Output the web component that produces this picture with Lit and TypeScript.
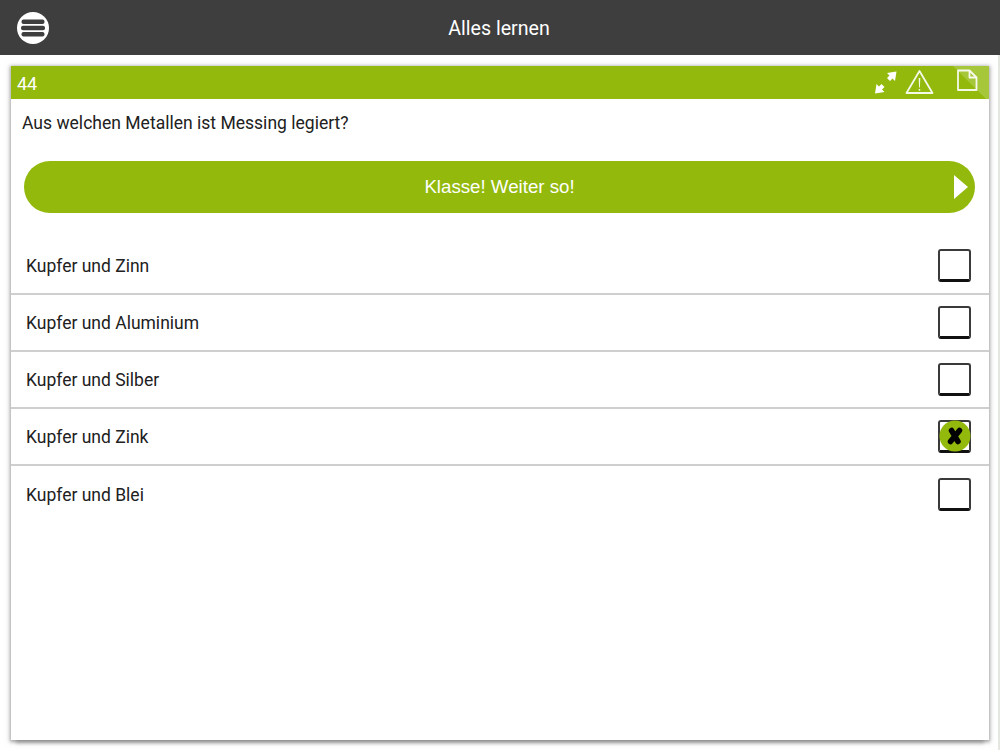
import { LitElement, html, css } from "lit";
import { customElement } from "lit/decorators.js";

const ANSWERS = [
  { label: "Kupfer und Zinn", marked: false },
  { label: "Kupfer und Aluminium", marked: false },
  { label: "Kupfer und Silber", marked: false },
  { label: "Kupfer und Zink", marked: true },
  { label: "Kupfer und Blei", marked: false },
];

@customElement("app-root")
export class AppRoot extends LitElement {
  static styles = css`
    :host { display: block; width: 1000px; height: 750px; overflow: hidden; background: #fff; font-family: Roboto, sans-serif; color: #212121; position: relative; }
    .edge { position: absolute; right: 0; top: 55px; bottom: 0; width: 2px; background: #e4e6e0; }
    .top { height: 55px; background: #3e3e3e; color: #fff; display: flex; align-items: center; justify-content: center; position: relative; font-size: 19.6px; }
    .menu { position: absolute; left: 17px; top: 12px; width: 32px; height: 32px; display: block; }
    .title { margin: 2px 2px 0 0; }
    .wrap { padding: 11px 11px 0; }
    .card { height: 674px; background: #fff; box-shadow: 0 1px 3px 1px rgba(0,0,0,.28), 0 1px 6px 2px rgba(0,0,0,.1), 0 9px 3px -5px rgba(0,0,0,.16); position: relative; }
    .bar { height: 33px; background: #92b90b; color: #fff; display: flex; align-items: center; position: relative; font-size: 18px; padding-left: 6px; box-sizing: border-box; padding-top: 2px; }
    .icons { position: absolute; left: 0; top: 0; width: 978px; height: 33px; display: block; }
    .q { margin: 0; padding: 14px 11px 0; font-size: 17.55px; line-height: 20px; height: 34px; box-sizing: content-box; }
    .next { margin: 14px 13px 0; width: 951px; height: 52px; border-radius: 26px; background: #92b90b; color: #fff; display: flex; align-items: center; justify-content: center; position: relative; font-family: "Liberation Sans", Arial, sans-serif; font-size: 18.7px; }
    .next svg { position: absolute; right: 7px; top: 14px; }
    .list { margin-top: 25px; }
    .row { height: 57px; box-sizing: border-box; display: flex; align-items: center; justify-content: space-between; padding: 0 18px 0 15px; font-size: 17.5px; border-bottom: 2px solid #cfcfcf; }
    .row:last-child { border-bottom: 0; }
    .box { width: 33px; height: 33px; margin-bottom: 1px; box-sizing: border-box; border: 2px solid #3a3a3a; border-bottom: 3px solid #111; border-radius: 3px; position: relative; background: #fff; }
    .mark { position: absolute; left: -1px; top: -2px; width: 32px; height: 32px; display: block; }
  `;

  render() {
    return html`
      <div class="top">
        <svg class="menu" viewBox="0 0 32 32">
          <circle cx="16" cy="16" r="16" fill="#fff"/>
          <rect x="4.5" y="7.5" width="23" height="4.500" rx="2" fill="#3e3e3e"/>
          <rect x="4" y="13.750" width="24" height="4.500" rx="2" fill="#3e3e3e"/>
          <rect x="4.5" y="20" width="23" height="4.500" rx="2" fill="#3e3e3e"/>
        </svg>
        <div class="title">Alles lernen</div>
      </div>
      <div class="wrap">
        <div class="card">
          <div class="bar">
            44
            <svg class="icons" viewBox="11 66 978 33">
              <path d="M953 66h36v33h-3z" fill="#fff" opacity=".2"/>
              <g fill="#fff">
                <path d="M896.500 71.500L895 81L892.500 78.500L890 81L887 78L889.500 75.500L887 73z"/>
                <path d="M875 93.500L876.500 84L879 86.500L881.500 84L884.500 87L882 89.500L884.500 92z"/>
              </g>
              <g fill="none" stroke="#fff" stroke-width="1.800" stroke-linejoin="round" opacity=".9">
                <path d="M919.500 71l13 22h-26z"/>
                <path d="M958 70.500h11.500l7 7v12.500h-18.500z"/>
                <path d="M969.500 70.500v7h7"/>
              </g>
              <path d="M918.700 78h1.600l-.4 9.500h-.8z" fill="#fff" opacity=".9"/>
              <circle cx="919.500" cy="89.800" r=".9" fill="#fff"/>
            </svg>
          </div>
          <p class="q">Aus welchen Metallen ist Messing legiert?</p>
          <div class="next">Klasse! Weiter so!
            <svg width="14" height="24" viewBox="0 0 14 24"><path d="M0 0l14 12L0 24z" fill="#fff"/></svg>
          </div>
          <div class="list">
            ${ANSWERS.map((a) => html`
              <div class="row"><span>${a.label}</span>
                <div class="box">${a.marked ? html`
                  <svg class="mark" viewBox="0 0 32 32">
                    <circle cx="16" cy="16" r="15.500" fill="#92b90b"/>
                    <path d="M12.500 10.500l6.500 11M20.500 10.500l-9 11" stroke="#000" stroke-width="5.500" stroke-linecap="round"/>
                  </svg>` : ""}</div>
              </div>`)}
          </div>
        </div>
      </div>
      <div class="edge"></div>
    `;
  }
}
